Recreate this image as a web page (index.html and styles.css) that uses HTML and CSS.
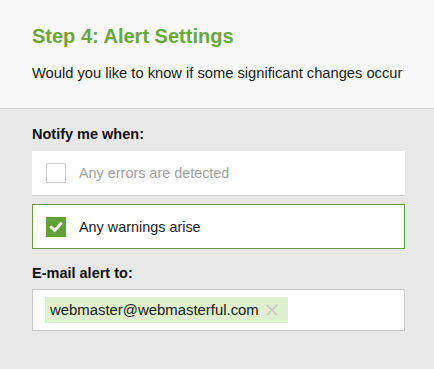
FILE: index.html
```html
<!DOCTYPE html>
<html>
<head>
<meta charset="utf-8">
<link rel="stylesheet" href="styles.css">
</head>
<body>
<header class="intro">
  <h1 class="title">Step 4: Alert Settings</h1>
  <p class="lead">Would you like to know if some significant changes occur</p>
</header>
<main class="form">
  <div class="label">Notify me when:</div>
  <label class="option">
    <span class="box"></span>
    <span class="opt-text">Any errors are detected</span>
  </label>
  <label class="option checked">
    <span class="box">
      <svg viewBox="0 0 20 20" width="20" height="20"><path d="M5.2 10.2 L8.6 13.4 L14.8 6.8" fill="none" stroke="#fff" stroke-width="2.8" stroke-linecap="square"/></svg>
    </span>
    <span class="opt-text">Any warnings arise</span>
  </label>
  <div class="label label-email">E-mail alert to:</div>
  <div class="input">
    <span class="tag">webmaster@webmasterful.com<svg class="x" viewBox="0 0 14 14" width="14" height="14"><path d="M1.5 1.5 L12.5 12.5 M12.5 1.5 L1.5 12.5" stroke="#c4c4c4" stroke-width="1.5" fill="none"/></svg></span>
  </div>
</main>
</body>
</html>
```
FILE: styles.css
```css
html, body { margin: 0; padding: 0; }
body {
  background: #e8e8e8;
  font-family: Arial, "Liberation Sans", sans-serif;
  color: #1a1a1a;
  width: 434px;
  height: 369px;
  overflow: hidden;
}
.intro {
  background: #f8f8f8;
  border-bottom: 1px solid #d2d2d2;
  height: 108px;
  padding: 0 32px;
  box-sizing: content-box;
}
.title {
  margin: 0;
  padding-top: 25px;
  font-size: 20px;
  line-height: 22px;
  font-weight: bold;
  color: #6aa63f;
}
.lead {
  margin: 18px 0 0;
  font-size: 14.7px;
  line-height: 16px;
  color: #1a1a1a;
  white-space: nowrap;
}
.form {
  padding: 17px 29px 0 32px;
  display: flex;
  flex-direction: column;
}
.label {
  font-size: 14.5px;
  font-weight: bold;
  line-height: 16px;
  color: #111;
  margin-bottom: 9px;
}
.label-email { margin-top: 16px; margin-bottom: 8px; }
.option {
  display: flex;
  align-items: center;
  gap: 13px;
  background: #fff;
  height: 44px;
  padding: 0 0 0 14px;
  border-bottom: 1px solid #cfcfcf;
  font-size: 14.4px;
  color: #a0a0a0;
}
.option + .option { margin-top: 8px; }
.option.checked {
  border: 1px solid #6b9a43;
  height: 43px;
  padding-left: 13px;
  color: #1a1a1a;
}
.box {
  width: 18px;
  height: 18px;
  border: 1px solid #cfcfcf;
  background: #fff;
  display: flex;
  align-items: center;
  justify-content: center;
}
.checked .box {
  border-color: #62a13a;
  background: #62a13a;
}
.checked .box svg { flex: none; }
.input {
  background: #fff;
  border: 1px solid #cbcbcb;
  height: 40px;
  display: flex;
  align-items: center;
  padding-left: 12px;
}
.tag {
  background: #dff0d0;
  height: 26px;
  display: flex;
  align-items: center;
  padding: 0 9px 0 5px;
  font-size: 14.9px;
  color: #1a1a1a;
}
.x {
  margin-left: 6px;
  flex: none;
}
```
